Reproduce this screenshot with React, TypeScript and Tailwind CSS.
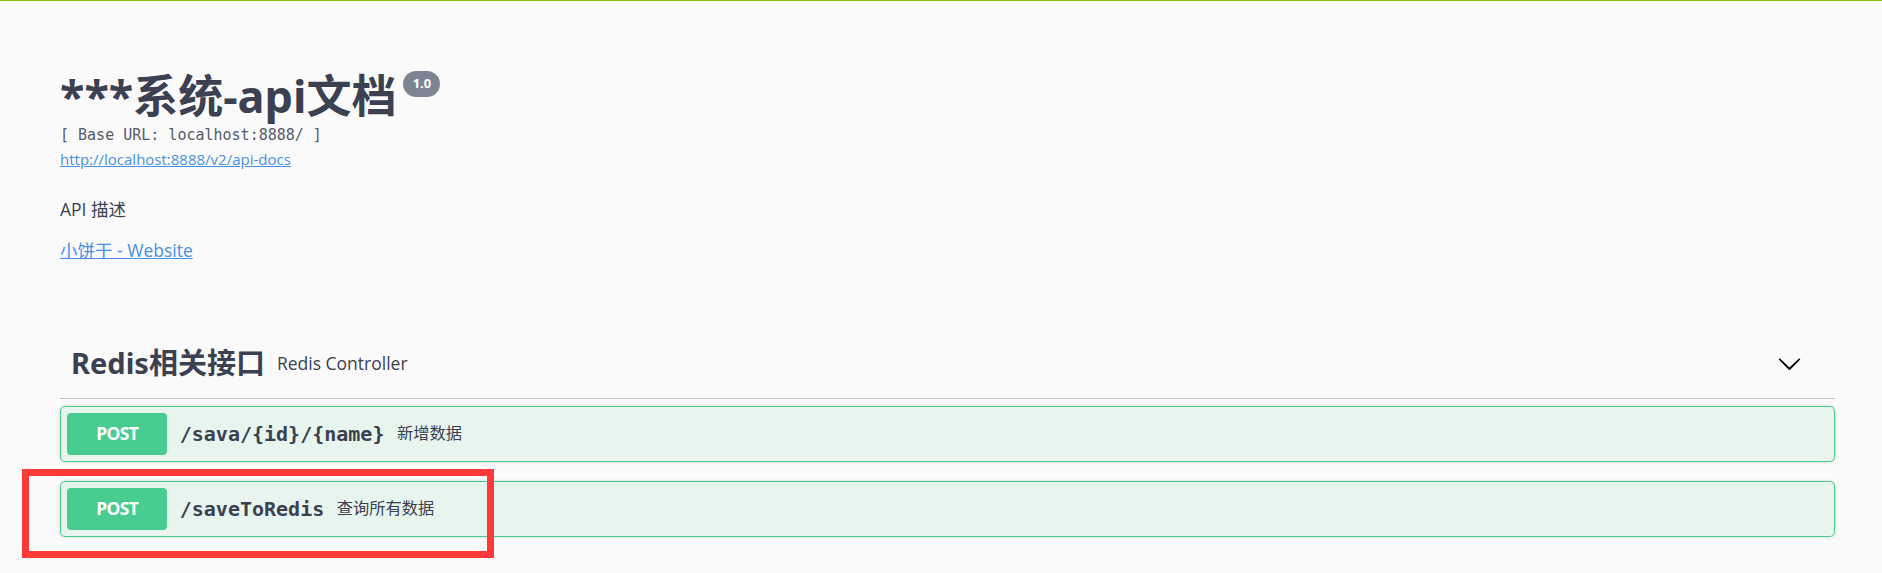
import React from "react";

const sans = "font-['Open_Sans','Noto_Sans_CJK_SC',sans-serif]";
const mono = "font-['DejaVu_Sans_Mono',monospace]";

function Chevron() {
  return (
    <svg width="25" height="25" viewBox="0 0 20 20" className="shrink-0">
      <path
        fill="#000"
        d="M17.418 6.109c.272-.268.709-.268.979 0s.271.701 0 .969l-7.908 7.83c-.27.268-.707.268-.979 0l-7.908-7.83c-.27-.268-.27-.701 0-.969.271-.268.709-.268.979 0L10 13.25l7.418-7.141z"
      />
    </svg>
  );
}

function OpBlock({ path, summary }: { path: string; summary: string }) {
  return (
    <div className="flex h-[56px] items-center rounded-[5px] border border-[#49cc90] bg-[#e8f5ef] px-[6.25px] shadow-[0_0_3px_rgba(0,0,0,0.19)]">
      <div className="flex h-[42px] w-[100px] items-center justify-center rounded-[4px] bg-[#49cc90] font-['Noto_Sans',sans-serif] text-[17.5px] font-bold tracking-[-0.6px] text-white">
        POST
      </div>
      <span className={`${mono} px-[12.5px] text-[20px] font-bold text-[#3b4151]`}>{path}</span>
      <span className={`${sans} text-[16.25px] text-[#3b4151]`}>{summary}</span>
    </div>
  );
}

export default function App() {
  return (
    <div className="relative min-h-screen bg-[#fafafa] text-[#3b4151]">
      <div className="h-px bg-[#89bf04]" />
      <div className="pl-[60px] pr-[47px]">
        <div className="mt-[67.5px] flex items-start">
          <h2 className="font-['Noto_Sans','Noto_Sans_CJK_SC',sans-serif] text-[45px] font-bold leading-[54px] text-[#3b4151]">
            ***系统-api文档
          </h2>
          <span className="ml-[7px] mt-[2.5px] flex h-[26px] w-[37px] items-center justify-center rounded-full bg-[#7d8492] font-['Noto_Sans',sans-serif] text-[13px] font-bold text-white">
            1.0
          </span>
        </div>
        <pre className="mt-[3.5px] font-['DejaVu_Sans_Mono',monospace] text-[15px] leading-[18px] text-[#565b68]">
          [ Base URL: localhost:8888/ ]
        </pre>
        <div className="mt-[6px] leading-[18px]">
          <a className={`${sans} text-[15px] text-[#4990e2] underline`}>http://localhost:8888/v2/api-docs</a>
        </div>
        <p className={`${sans} mt-[29px] text-[17.5px] leading-[24px] text-[#3b4151]`}>API 描述</p>
        <div className="mt-[17px] leading-[24px]">
          <a className={`${sans} text-[17.5px] text-[#4990e2] underline`}>小饼干 - Website</a>
        </div>

        <div className="mt-[82px] flex items-center border-b border-[rgba(59,65,81,0.3)] pb-[16.6px] pl-[11px] pr-[33.5px]">
          <h3 className="font-['Noto_Sans','Noto_Sans_CJK_SC',sans-serif] text-[29px] font-bold leading-[36px] text-[#3b4151]">
            Redis相关接口
          </h3>
          <small className={`${sans} ml-[12px] flex-1 text-[17.5px] leading-[24px] text-[#3b4151]`}>Redis Controller</small>
          <Chevron />
        </div>

        <div className="mt-[7px] flex flex-col gap-[19px]">
          <OpBlock path="/sava/{id}/{name}" summary="新增数据" />
          <OpBlock path="/saveToRedis" summary="查询所有数据" />
        </div>
      </div>
      <div className="absolute left-[22px] top-[469px] h-[89px] w-[472px] border-[7px] border-[#fc3a3a]" />
    </div>
  );
}
